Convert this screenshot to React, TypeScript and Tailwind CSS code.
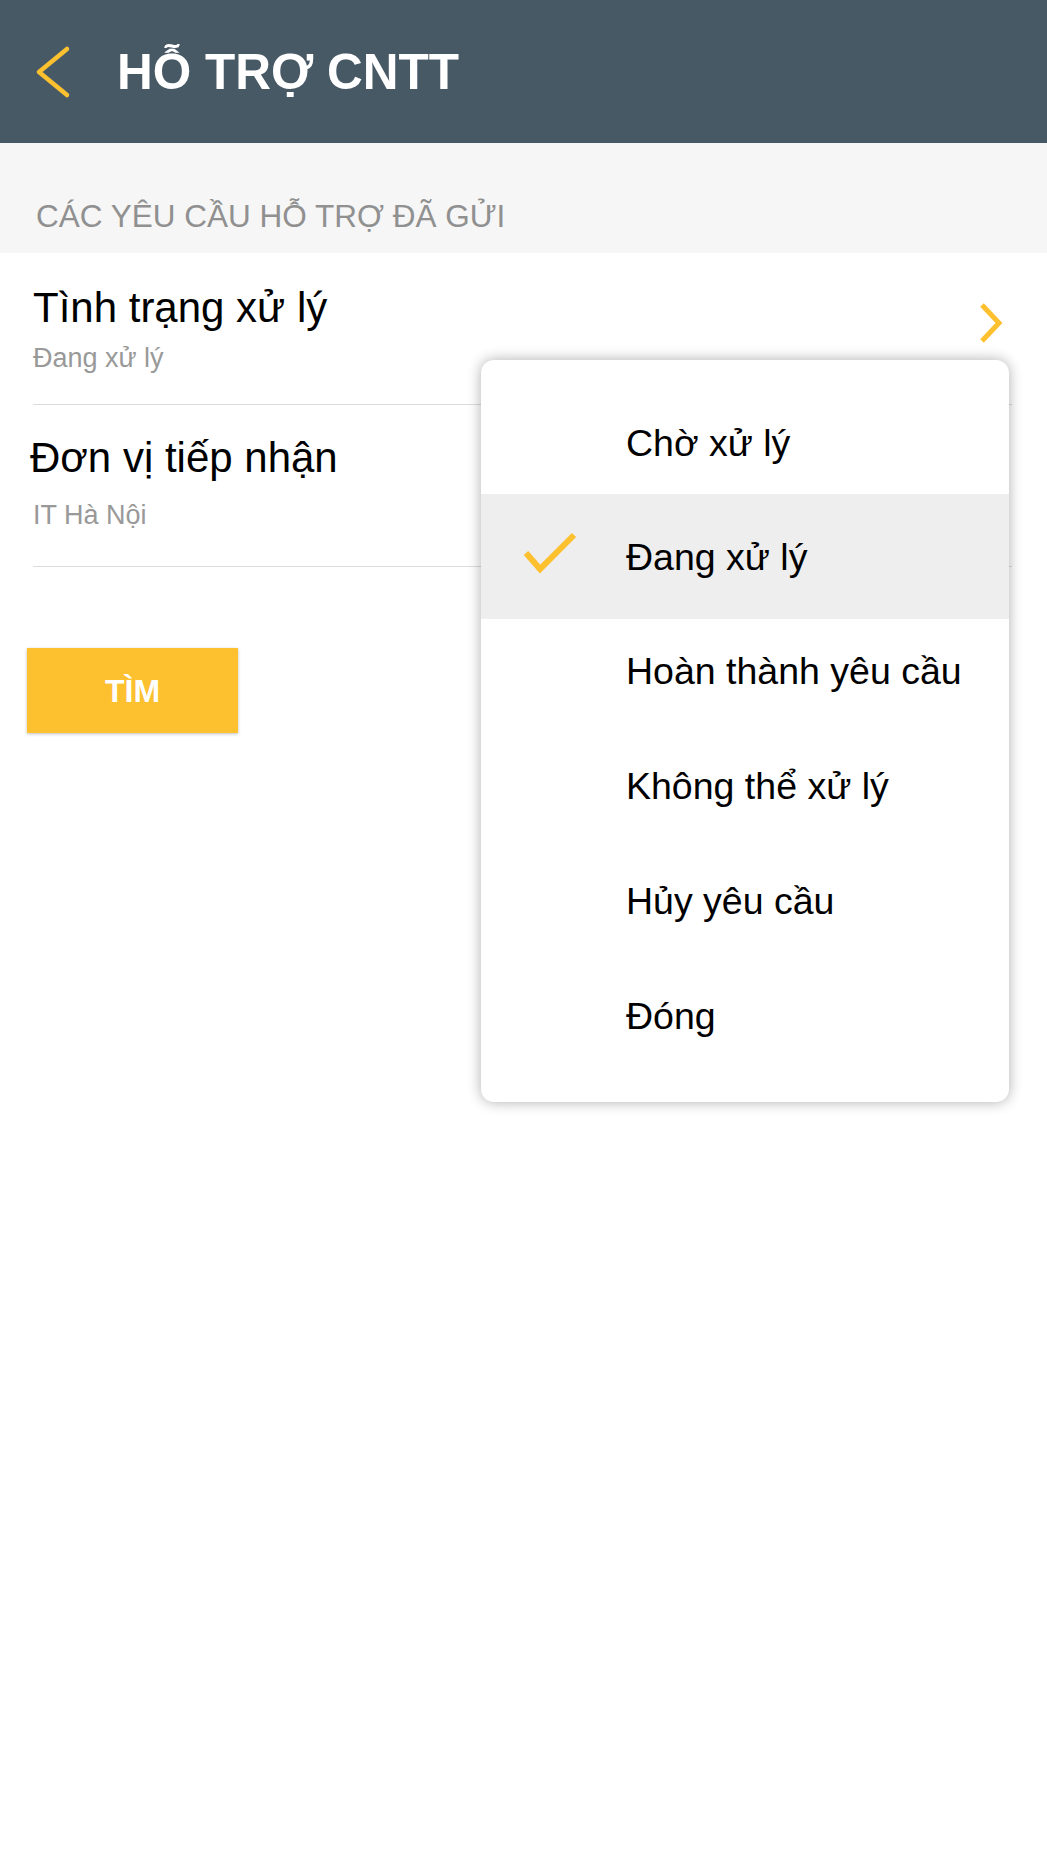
import React from "react";

const options = [
  "Chờ xử lý",
  "Đang xử lý",
  "Hoàn thành yêu cầu",
  "Không thể xử lý",
  "Hủy yêu cầu",
  "Đóng",
];

export default function App() {
  const selected = "Đang xử lý";
  return (
    <div className="relative w-[1047px] min-h-[1856px] bg-white font-['Liberation_Sans',Arial,sans-serif]">
      {/* header */}
      <header className="h-[143px] bg-[#485966] flex items-center">
        <svg className="ml-[34px] w-[38px] h-[56px]" viewBox="0 0 38 56" fill="none">
          <polyline points="33,5 5,28 33,51" stroke="#fdc02f" strokeWidth="4.5" strokeLinecap="round" strokeLinejoin="round" />
        </svg>
        <h1 className="ml-[45px] text-[49.5px] leading-[49px] font-bold text-white">HỖ TRỢ CNTT</h1>
      </header>

      <div className="h-[110px] bg-[#f6f6f6] pt-[57px] pl-[36px]">
        <p className="text-[31.5px] leading-[32px] text-[#909090]">CÁC YÊU CẦU HỖ TRỢ ĐÃ GỬI</p>
      </div>

      <div className="pl-[33px] pr-[35px]">
        <div className="flex items-start justify-between pt-[34px] pb-[32px] border-b border-[#dcdcdc]">
          <div>
            <p className="text-[42px] leading-[42px] text-black">Tình trạng xử lý</p>
            <p className="mt-[15px] text-[27px] leading-[28px] text-[#999999]">Đang xử lý</p>
          </div>
          <svg className="mt-[16px] mr-[8px] w-[26px] h-[40px]" viewBox="0 0 26 40" fill="none">
            <polyline points="4,2 21,20 4,38" stroke="#fdc02f" strokeWidth="5" />
          </svg>
        </div>
        <div className="pt-[32px] pb-[37px] border-b border-[#dcdcdc]">
          <p className="-ml-[3px] text-[42px] leading-[42px] text-black">Đơn vị tiếp nhận</p>
          <p className="mt-[22px] text-[27px] leading-[28px] text-[#999999]">IT Hà Nội</p>
        </div>
      </div>

      <button className="ml-[27px] mt-[81px] w-[211px] h-[85px] bg-[#fdc02f] text-white text-[32px] font-bold shadow-[0_1px_3px_rgba(0,0,0,0.25)]">
        TÌM
      </button>

      {/* dropdown overlay */}
      <div className="absolute left-[481px] top-[360px] w-[528px] h-[742px] bg-white rounded-[13px] shadow-[0_0_14px_rgba(0,0,0,0.32)] pt-[25px] overflow-hidden">
        {options.map((o) =>
          o === selected ? (
            <div key={o} className="relative z-10 -my-[6px] h-[125px] bg-[#eeeeee] flex items-center pl-[42px]">
              <svg className="w-[54px] h-[44px] -mt-[8px]" viewBox="0 0 54 44" fill="none">
                <polyline points="3,22 17,38 51,4" stroke="#fdc02f" strokeWidth="6" />
              </svg>
              <span className="ml-[49px] text-[37.5px] leading-[38px] text-black">{o}</span>
            </div>
          ) : (
            <div key={o} className="h-[115px] flex items-center pl-[145px]">
              <span className="text-[37.5px] leading-[38px] text-black">{o}</span>
            </div>
          )
        )}
      </div>
    </div>
  );
}
